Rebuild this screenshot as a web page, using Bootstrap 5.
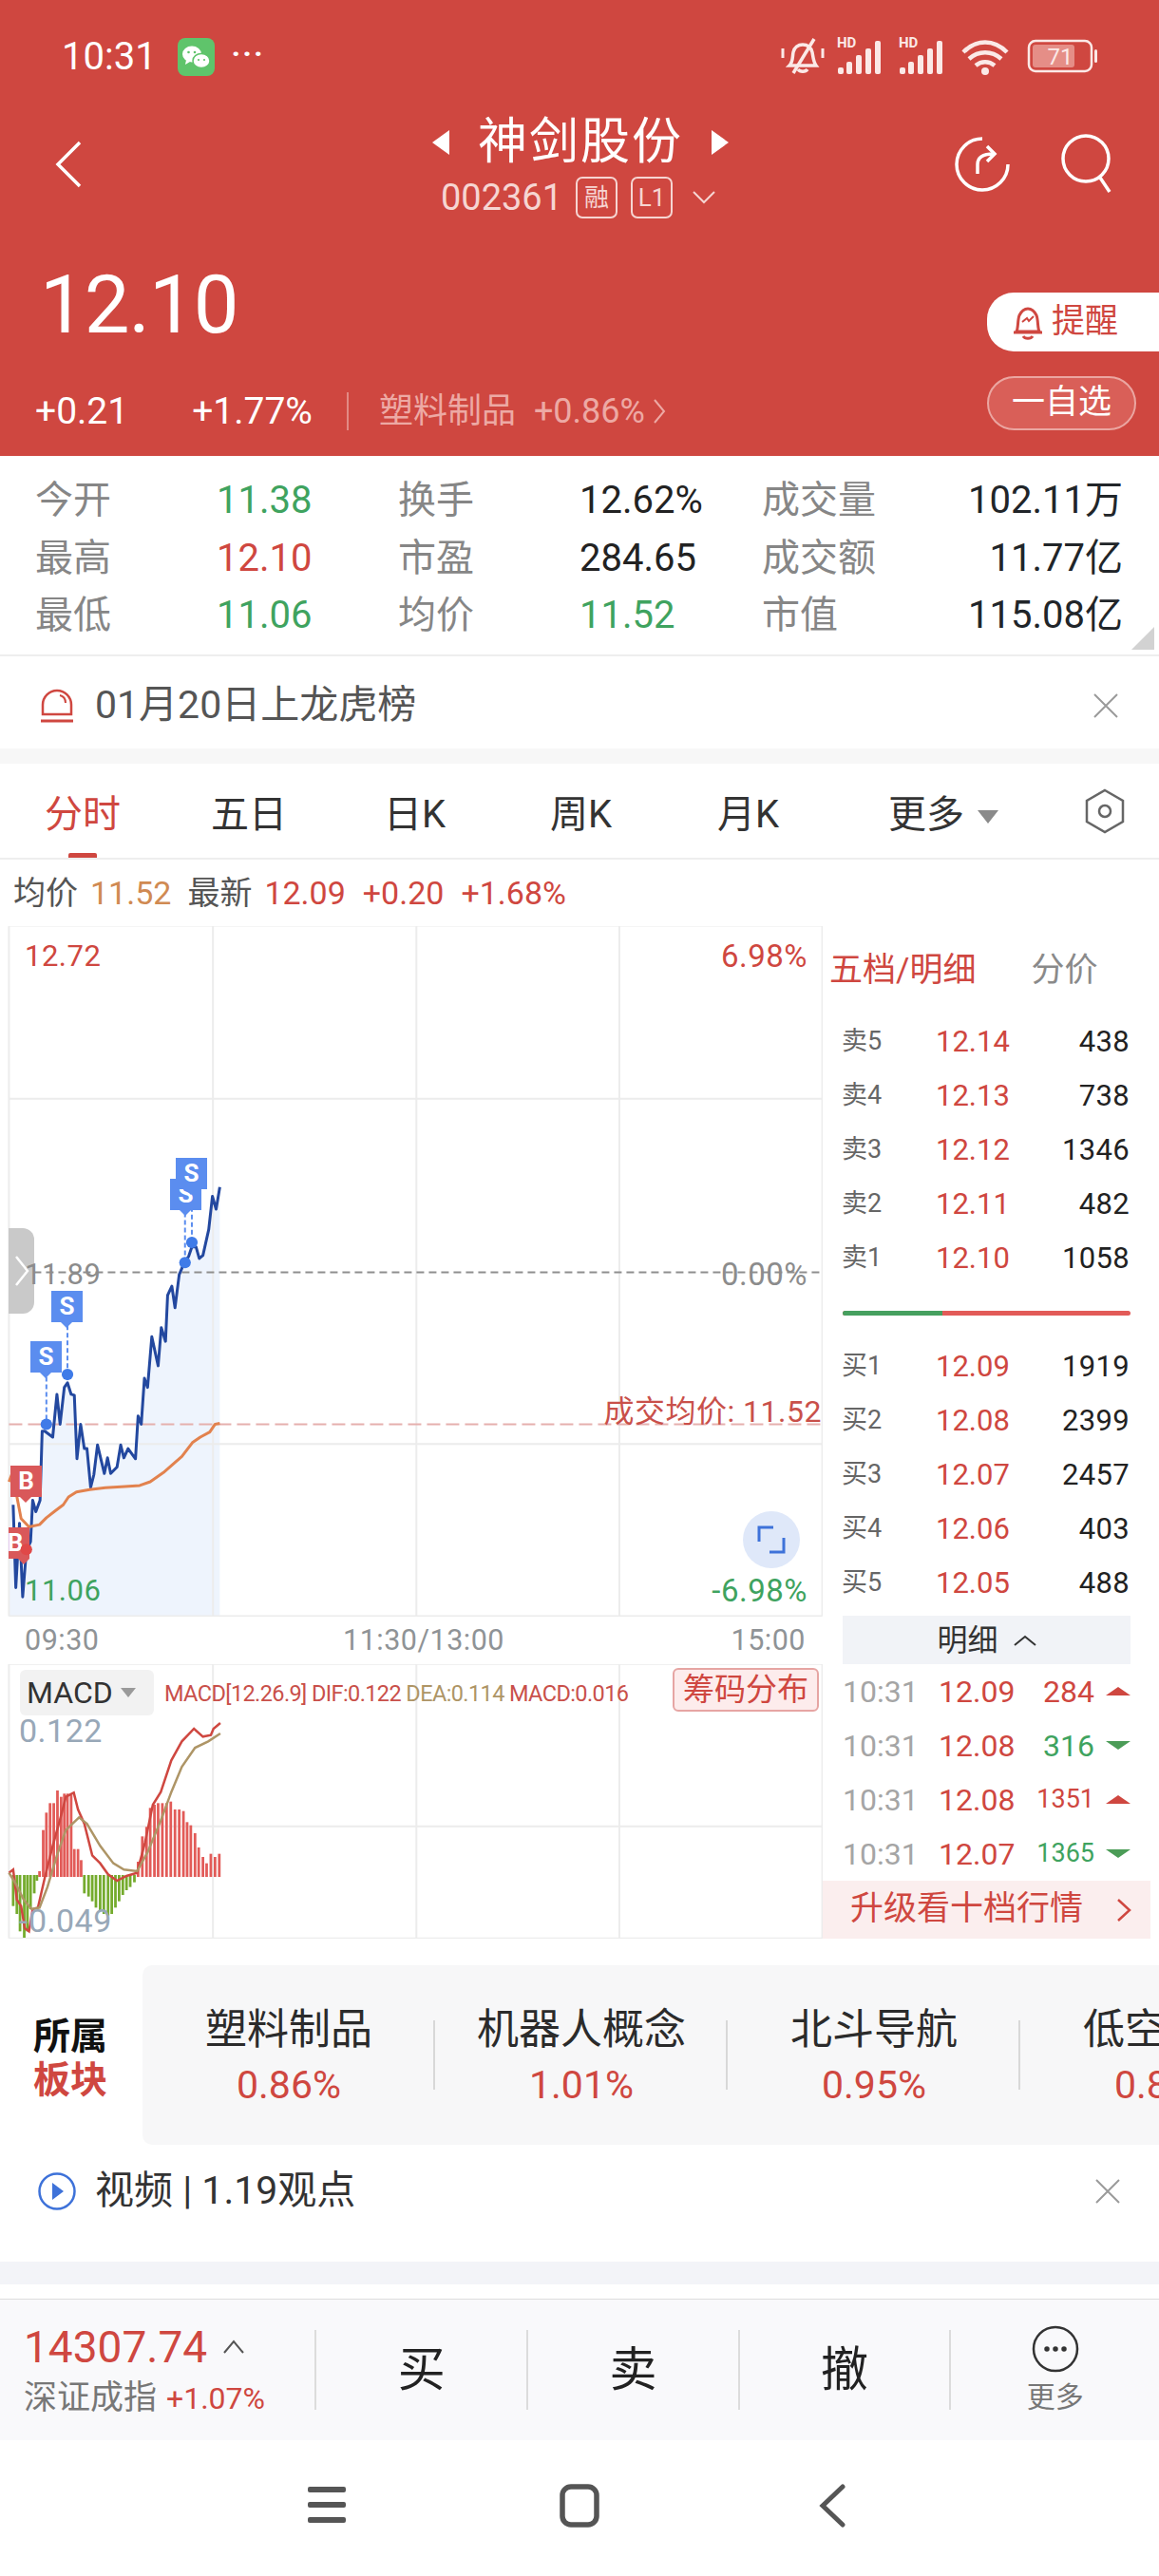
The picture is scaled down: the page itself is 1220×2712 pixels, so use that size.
<!DOCTYPE html>
<html lang="zh-CN">
<head>
<meta charset="UTF-8">
<title>神剑股份</title>
<link href="https://cdn.jsdelivr.net/npm/bootstrap@5.3.0/dist/css/bootstrap.min.css" rel="stylesheet">
<style>
body { width: 1220px; height: 2712px; overflow: hidden; background: #fff; font-family: Roboto, "Noto Sans CJK SC", sans-serif; color: #222; }
.hdr { height: 480px; background: #cf4740; color: #fff; }
.stbar { height: 76px; padding: 22px 64px 0 65px; box-sizing: content-box; }
.st-time { font-size: 40px; line-height: 1; }
.st-dots { font-size: 32px; font-weight: 700; letter-spacing: 2px; line-height: 1; margin-left: 18px; margin-top: -8px; }
.wx { margin-left: 22px; }
.ttlbar { height: 115px; margin-top: 17px; padding: 0 46px 0 48px; }
.ttl-side { flex: 1; }
.ttl-back { margin-left: 8px; }
.ttl-acts { gap: 52px; }
.ttl-mid { padding-top: 5px; }
.ttl-name { font-size: 52px; line-height: 60px; letter-spacing: 2px; }
.ttl-arrows { gap: 30px; }
.ttl-code { font-size: 38px; line-height: 46px; color: #f6d5d2; gap: 14px; margin-top: 5px; margin-left: -4px; }
.tag-box { font-size: 26px; line-height: 40px; height: 44px; width: 44px; border: 2px solid #f6d5d2; border-radius: 7px; text-align: center; white-space: nowrap; }
.ttl-caret { margin-left: 6px; }
.price-l { padding: 41px 0 0 42px; }
.price-num { font-size: 85px; line-height: 100px; font-weight: 400; letter-spacing: -1px; }
.price-sub { margin-top: 40px; margin-left: -5px; height: 44px; font-size: 39px; line-height: 44px; white-space: nowrap; }
.sub-pct { margin-left: 67px; }
.sub-sep { width: 2px; height: 40px; background: #e28a84; margin: 0 32px 0 36px; }
.sub-dim { color: #eda9a4; font-size: 36px; }
.sub-small { margin-left: 19px; }
.price-r { margin-top: 78px; width: 181px; }
.bell-btn { height: 62px; background: #fff; color: #cf4740; border-radius: 28px 0 0 28px; font-size: 35px; padding-left: 26px; gap: 8px; }
.fav-btn { height: 57px; width: 157px; margin-top: 26px; border: 2px solid #eba6a1; border-radius: 29px; background: #d95f58; font-size: 35px; color: #fff; }
.stat-grid { height: 211px; padding: 17px 38px 0 37px; display: grid; grid-template-columns: 191px 191px 191px 192px 1fr; grid-auto-rows: 60.5px; align-items: center; border-bottom: 2px solid #eee; position: relative; font-size: 40px; line-height: 1; }
.stat-lb { color: #868686; }
.stat-end { text-align: right; white-space: nowrap; }
.up { color: #cf4740; }
.dn { color: #3fa35f; }
.corner { position: absolute; right: 5px; bottom: 5px; width: 0; height: 0; border-left: 24px solid transparent; border-bottom: 24px solid #d2d2d2; }
.note-row { height: 97px; padding: 6px 42px 0 42px; font-size: 41px; color: #555; }
.note-txt { margin-left: 22px; }
.gap-band { height: 16px; background: #f7f7f7; }
.tabs { height: 101px; position: relative; border-bottom: 2px solid #eee; font-size: 40px; color: #333; }
.tab-item { position: absolute; top: 29px; line-height: 50px; white-space: nowrap; }
.t1 { left: 47px; color: #cf4740; }
.t2 { left: 222px; } .t3 { left: 404px; } .t4 { left: 579px; } .t5 { left: 755px; } .t6 { left: 935px; }
.tab-caret { display: inline-block; margin-left: 14px; vertical-align: middle; border-left: 11px solid transparent; border-right: 11px solid transparent; border-top: 14px solid #8a8a8a; }
.tab-bar { position: absolute; left: 72px; bottom: 0; width: 30px; height: 5px; background: #cf4740; border-radius: 2px 2px 0 0; }
.tab-hex { position: absolute; left: 1141px; top: 26px; }
.info-row { height: 70px; padding-left: 14px; font-size: 34px; color: #555; white-space: nowrap; gap: 13px; }
.info-row .orange { color: #d08a52; margin-right: 4px; }
.info-row .up { margin-right: 5px; }
.left-col { width: 866px; }
.right-col { width: 354px; }
.chart-wrap { height: 727px; position: relative; overflow: hidden; }
.chart-svg { position: absolute; left: 0; top: -16px; width: 870px; height: 760px; }
.lbl { position: absolute; transform: translateY(-50%); font-size: 31px; line-height: 1; white-space: nowrap; letter-spacing: .5px; }
.l-left { left: 26px; }
.l-right { right: 16px; font-size: 33px; }
.l-top { top: 31px; }
.l-mid { top: 366px; color: #8c8c8c; }
.l-low { top: 699px; }
.l-avg { top: 511px; right: 1px; color: #c9504a; font-size: 32px; }
.mk { position: absolute; width: 33px; height: 33px; background: #5b8def; color: #fff; font-size: 26px; font-weight: 700; line-height: 33px; text-align: center; }
.mk::after { content: ""; position: absolute; left: 10px; top: 33px; border-left: 6px solid transparent; border-right: 6px solid transparent; border-top: 6px solid #5b8def; }
.mk-b { background: #d9585a; }
.mk-b::after { border-top-color: #d9585a; }
.s1 { left: 32px; top: 437px; } .s2 { left: 54px; top: 384px; } .s3 { left: 179px; top: 266px; } .s4 { left: 185px; top: 244px; }
.b1 { left: 11px; top: 568px; } .b2 { left: 9px; top: 633px; width: 22px; text-indent: -8px; overflow: visible; }
.grip { position: absolute; left: 9px; top: 318px; width: 27px; height: 90px; background: #c9c9c9; border-radius: 0 12px 12px 0; }
.zoom-btn { position: absolute; left: 782px; top: 616px; width: 60px; height: 60px; border-radius: 50%; background: #dfe8f9; }
.axis-row { height: 50px; padding: 0 18px 0 26px; font-size: 30.500px; color: #8f9396; letter-spacing: .5px; }
.axis-mid { margin-left: 18px; }
.macd-wrap { height: 289px; position: relative; overflow: hidden; }
.macd-svg { position: absolute; left: 0; top: -52px; width: 870px; height: 360px; }
.macd-sel { position: absolute; left: 21px; top: 6px; width: 141px; height: 48px; background: #f2f2f2; border-radius: 6px; font-size: 32px; color: #333; padding-left: 7px; gap: 8px; }
.macd-caret { border-left: 8px solid transparent; border-right: 8px solid transparent; border-top: 10px solid #9a9a9a; }
.macd-leg { position: absolute; left: 173px; top: 17px; font-size: 23.500px; line-height: 28px; color: #c9504a; white-space: nowrap; letter-spacing: -.6px; }
.macd-leg .tan { color: #ae9566; }
.chip-btn { position: absolute; left: 708px; top: 4px; width: 154px; height: 46px; background: #fdecec; border: 2px solid #e6a5a3; border-radius: 6px; font-size: 33px; line-height: 42px; text-align: center; color: #cf4740; white-space: nowrap; }
.m-hi { left: 20px; top: 70px; color: #98a8b8; font-size: 34px; }
.m-lo { left: 20px; top: 270px; color: #98a8b8; font-size: 34px; }
.rp-head { height: 93px; padding-left: 7px; font-size: 35px; line-height: 1; white-space: nowrap; }
.rp-head .gray { color: #8a8a8a; margin-left: 58px; }
.q-row { height: 57px; padding: 0 31px 0 20px; display: grid; grid-template-columns: 99px 90px 1fr; align-items: center; font-size: 31px; line-height: 1; }
.q-lab { font-size: 27px; color: #666; white-space: nowrap; }
.q-num { text-align: right; letter-spacing: .3px; }
.ob-bar { height: 5px; margin: 27px 30px 25px 21px; border-radius: 3px; overflow: hidden; background: #e25b58; }
.ob-green { width: 105px; height: 100%; background: #46a05f; }
.mx-head { height: 51px; margin: 6px 30px 0 21px; background: #f1f3f7; font-size: 32px; color: #333; gap: 16px; }
.t-row { height: 57px; padding: 0 30px 0 21px; display: grid; grid-template-columns: 101px 91px 73px 1fr; align-items: center; font-size: 32px; line-height: 1; }
.t-time { color: #a5a5a5; }
.t-qty { text-align: right; }
.t-qty.sm { font-size: 27px; }
.tri-u { justify-self: end; border-left: 13px solid transparent; border-right: 13px solid transparent; border-bottom: 9px solid #cf4740; }
.tri-d { justify-self: end; border-left: 13px solid transparent; border-right: 13px solid transparent; border-top: 9px solid #4b9c57; }
.upsell { height: 61px; margin-right: 9px; background: #fbeeee; color: #cf4740; font-size: 35px; padding: 0 20px 0 29px; white-space: nowrap; }
.plates { height: 189px; margin-top: 28px; overflow: hidden; }
.plate-tt { width: 150px; padding: 6px 0 0 35px; font-size: 39px; font-weight: 700; line-height: 46px; color: #111; flex-shrink: 0; }
.plate-box { flex-grow: 1; background: #f7f7f8; border-radius: 10px 0 0 10px; }
.plate-it { width: 308px; flex-shrink: 0; position: relative; text-align: center; white-space: nowrap; }
.plate-it::after { content: ""; position: absolute; right: 0; top: 58px; width: 2px; height: 73px; background: #d8d8d8; }
.plate-name { margin-top: 39px; font-size: 44px; line-height: 58px; color: #2b2b2b; }
.plate-pct { font-size: 41px; line-height: 58px; color: #cf4740; }
.vid-row { height: 123px; padding: 0 40px 25px 40px; font-size: 41px; color: #333; }
.vid-txt { margin-left: 20px; }
.band2 { height: 24px; background: #f3f4f8; }
.band3 { height: 15px; }
.botbar { height: 149px; background: #f9f9fb; border-top: 1px solid #ddd; }
.idx { width: 332px; padding: 0 0 0 25px; height: 100%; white-space: nowrap; }
.idx-num { font-size: 46px; line-height: 58px; color: #cf4740; }
.idx-name { font-size: 35px; line-height: 46px; color: #777; margin-top: 2px; }
.idx-pct { font-size: 32px; color: #cf4740; margin-left: 10px; }
.act { width: 223px; height: 84px; border-left: 2px solid #dcdcdc; font-size: 50px; color: #222; }
.act-more { width: 219px; height: 100%; border: 0; font-size: 30px; color: #777; line-height: 36px; position: relative; }
.act-sep { width: 2px; height: 84px; background: #dcdcdc; }
.navbar-os { height: 143px; padding-bottom: 4px; position: relative; }
.os-ic { position: absolute; top: 46px; }
.os-1 { left: 322px; } .os-2 { left: 588px; } .os-3 { left: 860px; }
</style>
</head>
<body>

<div class="hdr">
  <div class="stbar d-flex align-items-center justify-content-between">
    <div class="d-flex align-items-center">
      <span class="st-time">10:31</span>
      <svg class="wx" width="39" height="40" viewBox="0 0 39 40"><rect width="39" height="40" rx="8" fill="#5fc46b"/><ellipse cx="15" cy="17" rx="10" ry="8.5" fill="#fff"/><path d="M9 23l-1 5 5-3z" fill="#fff"/><ellipse cx="25" cy="24" rx="9" ry="7.5" fill="#fff" stroke="#5fc46b" stroke-width="1.5"/><circle cx="11.500" cy="15" r="1.300" fill="#5fc46b"/><circle cx="18" cy="15" r="1.300" fill="#5fc46b"/><circle cx="22" cy="23" r="1.100" fill="#5fc46b"/><circle cx="28" cy="23" r="1.100" fill="#5fc46b"/></svg>
      <span class="st-dots">···</span>
    </div>
    <div class="d-flex align-items-center">
      <svg width="335" height="46" viewBox="0 0 335 46" fill="none" stroke="#fbe9e7">
        <path d="M10 32c4-4 3-9 4-14 1-5 5-8 10-8s9 3 10 8c1 5 1 10 4 14z" stroke-width="3.500"/><path d="M19 36c2 3 8 3 10 0" stroke-width="3.500"/><path d="M14 40L36 4" stroke-width="3.500"/><path d="M3 14v10M45 14v10" stroke-width="3"/>
        <g fill="#fbe9e7" stroke="none">
          <text x="60" y="13" font-size="15" font-weight="700" font-family="Roboto, sans-serif">HD</text>
          <rect x="61" y="34" width="6" height="7" rx="2"/><rect x="70" y="28" width="6" height="13" rx="2"/><rect x="80" y="21" width="6" height="20" rx="2"/><rect x="90" y="14" width="6" height="27" rx="2"/><rect x="100" y="6" width="6" height="35" rx="2"/>
          <text x="125" y="13" font-size="15" font-weight="700" font-family="Roboto, sans-serif">HD</text>
          <rect x="126" y="34" width="6" height="7" rx="2"/><rect x="135" y="28" width="6" height="13" rx="2"/><rect x="145" y="21" width="6" height="20" rx="2"/><rect x="155" y="14" width="6" height="27" rx="2"/><rect x="165" y="6" width="6" height="35" rx="2"/>
          <circle cx="216" cy="38" r="4"/>
        </g>
        <path d="M193 18c14-14 32-14 46 0M199 25c10-9 24-9 34 0M206 32c6-5 14-5 20 0" stroke-width="4.500"/>
        <rect x="262" y="6" width="66" height="32" rx="7" stroke-width="2.500"/><rect x="266" y="10" width="44" height="24" rx="3" fill="#e58e87" stroke="none"/><rect x="331" y="15" width="3" height="14" rx="1.500" fill="#fbe9e7" stroke="none"/>
        <text x="295" y="31" text-anchor="middle" font-size="24" fill="#fbe9e7" stroke="none" font-family="Roboto, sans-serif">71</text>
      </svg>
    </div>
  </div>

  <div class="ttlbar d-flex align-items-center">
    <div class="ttl-side">
      <svg class="ttl-back" width="32" height="52" viewBox="0 0 32 52" fill="none" stroke="#fff" stroke-width="3.500"><path d="M28 3L5 26l23 23"/></svg>
    </div>
    <div class="text-center ttl-mid">
      <div class="d-flex align-items-center justify-content-center ttl-arrows">
        <svg width="18" height="26" viewBox="0 0 18 26"><path d="M18 0v26L0 13z" fill="#fff"/></svg>
        <span class="ttl-name">神剑股份</span>
        <svg width="18" height="26" viewBox="0 0 18 26"><path d="M0 0v26l18-13z" fill="#fff"/></svg>
      </div>
      <div class="d-flex align-items-center justify-content-center ttl-code">
        <span>002361</span><span class="tag-box">融</span><span class="tag-box">L1</span>
        <svg class="ttl-caret" width="26" height="16" viewBox="0 0 26 16" fill="none" stroke="#f6d5d2" stroke-width="2"><path d="M2 2l11 11L24 2"/></svg>
      </div>
    </div>
    <div class="ttl-side d-flex justify-content-end align-items-center ttl-acts">
      <svg width="60" height="60" viewBox="0 0 60 60" fill="none" stroke="#fff" stroke-width="3.500"><path d="M30 3A27 27 0 1 0 57 30"/><path d="M25 40V30c0-7 5-11 17-11"/><path d="M35 11l8 8-8 8"/></svg>
      <svg width="58" height="66" viewBox="0 0 58 66" fill="none" stroke="#fff" stroke-width="3.500"><circle cx="27" cy="27" r="24"/><path d="M42 47l10 15"/></svg>
    </div>
  </div>

  <div class="d-flex justify-content-between">
    <div class="price-l">
      <div class="price-num">12.10</div>
      <div class="price-sub d-flex align-items-center">
        <span>+0.21</span><span class="sub-pct">+1.77%</span><span class="sub-sep"></span>
        <span class="sub-dim">塑料制品</span><span class="sub-dim sub-small">+0.86%</span>
        <svg class="ms-2" width="14" height="28" viewBox="0 0 14 28" fill="none" stroke="#eda9a4" stroke-width="2"><path d="M2 2l10 12L2 26"/></svg>
      </div>
    </div>
    <div class="price-r">
      <div class="bell-btn d-flex align-items-center">
        <svg width="34" height="40" viewBox="0 0 34 40" fill="none" stroke="#cf4740" stroke-width="3"><path d="M5 30c2-4 1-12 3-17 2-4 5-7 9-7s7 3 9 7c2 5 1 13 3 17z"/><path d="M2 31h30"/><path d="M12 35c2 3 8 3 10 0"/><path d="M11 20l5-4 2 3 5-5" stroke-width="2"/></svg>
        <span>提醒</span>
      </div>
      <div class="fav-btn d-flex align-items-center justify-content-center"><span>一自选</span></div>
    </div>
  </div>
</div>

<div class="stat-grid">
  <span class="stat-lb">今开</span><span class="dn">11.38</span><span class="stat-lb">换手</span><span>12.62%</span><span class="stat-lb d-flex justify-content-between"><span>成交量</span><span class="stat-end text-body">102.11万</span></span>
  <span class="stat-lb">最高</span><span class="up">12.10</span><span class="stat-lb">市盈</span><span>284.65</span><span class="stat-lb d-flex justify-content-between"><span>成交额</span><span class="stat-end text-body">11.77亿</span></span>
  <span class="stat-lb">最低</span><span class="dn">11.06</span><span class="stat-lb">均价</span><span class="dn">11.52</span><span class="stat-lb d-flex justify-content-between"><span>市值</span><span class="stat-end text-body">115.08亿</span></span>
  <span class="corner"></span>
</div>

<div class="note-row d-flex align-items-center">
  <svg width="36" height="38" viewBox="0 0 36 38" fill="none" stroke="#cf4740" stroke-width="2.500"><path d="M3 28V18a15 15 0 0 1 30 0v10z"/><path d="M1 35h34" stroke-width="3"/><path d="M21 8c4 1 6 4 6 8" stroke-width="2"/></svg>
  <span class="note-txt flex-grow-1">01月20日上龙虎榜</span>
  <svg width="28" height="28" viewBox="0 0 28 28" fill="none" stroke="#9a9a9a" stroke-width="2"><path d="M2 2l24 24M26 2L2 26"/></svg>
</div>
<div class="gap-band"></div>

<div class="tabs">
  <span class="tab-item t1">分时</span><span class="tab-item t2">五日</span><span class="tab-item t3">日K</span><span class="tab-item t4">周K</span><span class="tab-item t5">月K</span><span class="tab-item t6">更多<span class="tab-caret"></span></span>
  <span class="tab-bar"></span>
  <svg class="tab-hex" width="44" height="48" viewBox="0 0 44 48" fill="none" stroke="#666" stroke-width="2.500"><path d="M22 2l19 11v22L22 46 3 35V13z"/><circle cx="22" cy="24" r="6"/></svg>
</div>

<div class="info-row d-flex align-items-center">
  <span>均价</span><span class="orange">11.52</span><span>最新</span><span class="up">12.09</span><span class="up">+0.20</span><span class="up">+1.68%</span>
</div>

<div class="d-flex">
  <div class="left-col">
    <div class="chart-wrap">
      <svg class="chart-svg" viewBox="0 0 1568 1568" preserveAspectRatio="none" fill="none">
        <path d="M17 1532V1225L25 1290 30 1470 37 1330 43 1490 50 1390 58 1370 62 1280 68 1305 76 1280 80 1130 85 1130 100 1143 108 1050 114 1115 122 1035 128 1025 135 1050 141 1052 146 1190 153 1115 160 1168 165 1168 172 1252 178 1225 185 1160 198 1222 204 1188 210 1222 222 1208 229 1160 235 1188 243 1168 257 1190 262 1097 268 1115 274 1015 280 1035 288 925 300 988 306 905 314 935 318 835 326 815 332 862 340 790 350 763 358 750 364 730 372 730 378 755 385 748 396 692 403 620 410 648 417 600V1532z" fill="#eef4fd"/>
        <path vector-effect="non-scaling-stroke" d="M17 32H1560M17 408H1560M17 1158H1560M17 1532H1560M17 32V1532M404 32V1532M790 32V1532M1175 32V1532M1560 32V1532" stroke="#ececec" stroke-width="2"/>
        <path vector-effect="non-scaling-stroke" d="M17 785H1560" stroke="#8f8f8f" stroke-width="2" stroke-dasharray="8 5"/>
        <path vector-effect="non-scaling-stroke" d="M17 1115H1560" stroke="#e5b0ae" stroke-width="2" stroke-dasharray="14 6"/>
        <path vector-effect="non-scaling-stroke" d="M88 1012V1115M128 900V1007M351 655V764M364 610V720" stroke="#5b8def" stroke-width="2" stroke-dasharray="5 3"/>
        <path vector-effect="non-scaling-stroke" d="M25 1290L30 1470 37 1330 43 1490 50 1390 58 1370 62 1280 68 1305 76 1280 80 1130 85 1130 100 1143 108 1050 114 1115 122 1035 128 1025 135 1050 141 1052 146 1190 153 1115 160 1168 165 1168 172 1252 178 1225 185 1160 198 1222 204 1188 210 1222 222 1208 229 1160 235 1188 243 1168 257 1190 262 1097 268 1115 274 1015 280 1035 288 925 300 988 306 905 314 935 318 835 326 815 332 862 340 790 350 763 358 750 364 730 372 730 378 755 385 748 396 692 403 620 410 648 417 600" stroke="#23489f" stroke-width="3" stroke-linejoin="round"/>
        <path vector-effect="non-scaling-stroke" d="M17 1240L22 1225 30 1260 40 1320 55 1338 75 1333 88 1318 105 1303 120 1290 130 1273 145 1262 170 1257 200 1253 230 1251 265 1248 285 1240 310 1220 330 1200 345 1185 365 1155 380 1143 398 1132 408 1115 417 1113" stroke="#e2824e" stroke-width="3" stroke-linejoin="round"/>
        <ellipse cx="88" cy="1115" rx="11" ry="12.500" fill="#3f7be8"/><ellipse cx="128" cy="1007" rx="11" ry="12.500" fill="#3f7be8"/><ellipse cx="351" cy="764" rx="11" ry="12.500" fill="#3f7be8"/><ellipse cx="364" cy="720" rx="11" ry="12.500" fill="#3f7be8"/>
      </svg>
      <span class="grip d-flex align-items-center justify-content-center">
        <svg width="16" height="34" viewBox="0 0 16 34" fill="none" stroke="#fff" stroke-width="2.500"><path d="M2 2l12 15L2 32"/></svg>
      </span>
      <span class="lbl l-left l-top up">12.72</span>
      <span class="lbl l-right l-top up">6.98%</span>
      <span class="lbl l-left l-mid">11.89</span>
      <span class="lbl l-right l-mid">0.00%</span>
      <span class="lbl l-avg">成交均价: 11.52</span>
      <span class="mk s1">S</span><span class="mk s2">S</span><span class="mk s3">S</span><span class="mk s4">S</span>
      <span class="mk mk-b b2">B</span><span class="mk mk-b b1">B</span>
      <svg class="chart-svg" viewBox="0 0 1568 1568" preserveAspectRatio="none"><ellipse cx="50" cy="1387" rx="11" ry="12.500" fill="#e04848"/></svg>
      <span class="lbl l-left l-low dn">11.06</span>
      <span class="lbl l-right l-low dn">-6.98%</span>
      <span class="zoom-btn d-flex align-items-center justify-content-center">
        <svg width="30" height="30" viewBox="0 0 30 30" fill="none" stroke="#3e72d9" stroke-width="3"><path d="M2 17V2h15M13 28h15V13"/></svg>
      </span>
    </div>
    <div class="axis-row d-flex align-items-center justify-content-between">
      <span>09:30</span><span class="axis-mid">11:30/13:00</span><span>15:00</span>
    </div>
    <div class="macd-wrap">
      <svg class="macd-svg" viewBox="0 0 1568 1080" preserveAspectRatio="none" fill="none">
        <path vector-effect="non-scaling-stroke" d="M17 155H1560M17 668H1560M17 1022H1560M17 155V1022M404 155V1022M790 155V1022M1175 155V1022M1560 155V1022" stroke="#ececec" stroke-width="2"/>
        <g id="macdBars"></g>
        <path vector-effect="non-scaling-stroke" d="M17 815L25 805 32 900 40 920 47 990 55 1000 62 930 72 925 85 830 100 730 115 640 125 575 140 562 148 615 160 660 175 760 190 785 205 820 222 840 240 825 260 815 275 720 290 600 305 560 325 460 345 400 368 360 385 385 400 380 405 360 418 342" stroke="#cf4740" stroke-width="2.500"/>
        <path vector-effect="non-scaling-stroke" d="M17 815L30 850 45 900 60 930 75 925 90 860 110 750 125 680 150 640 165 660 190 730 215 785 235 805 260 810 280 750 305 650 325 560 345 480 370 420 395 400 418 375" stroke="#ae9566" stroke-width="2.500"/>
      </svg>
      <div class="macd-sel d-flex align-items-center"><span>MACD</span><span class="macd-caret"></span></div>
      <div class="macd-leg">MACD[12.26.9] DIF:0.122 <span class="tan">DEA:0.114</span> MACD:0.016</div>
      <div class="chip-btn">筹码分布</div>
      <span class="lbl m-hi">0.122</span>
      <span class="lbl m-lo">-0.049</span>
    </div>
  </div>

  <div class="right-col">
    <div class="rp-head d-flex align-items-center"><span class="up">五档/明细</span><span class="gray">分价</span></div>
    <div class="q-row"><span class="q-lab">卖5</span><span class="up">12.14</span><span class="q-num">438</span></div>
    <div class="q-row"><span class="q-lab">卖4</span><span class="up">12.13</span><span class="q-num">738</span></div>
    <div class="q-row"><span class="q-lab">卖3</span><span class="up">12.12</span><span class="q-num">1346</span></div>
    <div class="q-row"><span class="q-lab">卖2</span><span class="up">12.11</span><span class="q-num">482</span></div>
    <div class="q-row"><span class="q-lab">卖1</span><span class="up">12.10</span><span class="q-num">1058</span></div>
    <div class="ob-bar"><div class="ob-green"></div></div>
    <div class="q-row"><span class="q-lab">买1</span><span class="up">12.09</span><span class="q-num">1919</span></div>
    <div class="q-row"><span class="q-lab">买2</span><span class="up">12.08</span><span class="q-num">2399</span></div>
    <div class="q-row"><span class="q-lab">买3</span><span class="up">12.07</span><span class="q-num">2457</span></div>
    <div class="q-row"><span class="q-lab">买4</span><span class="up">12.06</span><span class="q-num">403</span></div>
    <div class="q-row"><span class="q-lab">买5</span><span class="up">12.05</span><span class="q-num">488</span></div>
    <div class="mx-head d-flex align-items-center justify-content-center">
      <span>明细</span>
      <svg width="24" height="12" viewBox="0 0 24 12" fill="none" stroke="#333" stroke-width="2"><path d="M1 11L12 2l11 9"/></svg>
    </div>
    <div class="t-row"><span class="t-time">10:31</span><span class="up">12.09</span><span class="t-qty up">284</span><span class="tri-u"></span></div>
    <div class="t-row"><span class="t-time">10:31</span><span class="up">12.08</span><span class="t-qty dn">316</span><span class="tri-d"></span></div>
    <div class="t-row"><span class="t-time">10:31</span><span class="up">12.08</span><span class="t-qty sm up">1351</span><span class="tri-u"></span></div>
    <div class="t-row"><span class="t-time">10:31</span><span class="up">12.07</span><span class="t-qty sm dn">1365</span><span class="tri-d"></span></div>
    <div class="upsell d-flex align-items-center justify-content-between">
      <span>升级看十档行情</span>
      <svg width="16" height="26" viewBox="0 0 16 26" fill="none" stroke="#cf4740" stroke-width="2.500"><path d="M2 2l12 11L2 24"/></svg>
    </div>
  </div>
</div>

<div class="plates d-flex">
  <div class="plate-tt d-flex flex-column justify-content-center"><span>所属</span><span class="up">板块</span></div>
  <div class="plate-box d-flex">
    <div class="plate-it"><div class="plate-name">塑料制品</div><div class="plate-pct">0.86%</div></div>
    <div class="plate-it"><div class="plate-name">机器人概念</div><div class="plate-pct">1.01%</div></div>
    <div class="plate-it"><div class="plate-name">北斗导航</div><div class="plate-pct">0.95%</div></div>
    <div class="plate-it"><div class="plate-name">低空经济</div><div class="plate-pct">0.88%</div></div>
  </div>
</div>

<div class="vid-row d-flex align-items-center">
  <svg width="40" height="40" viewBox="0 0 40 40"><circle cx="20" cy="20" r="18.500" fill="none" stroke="#3e72d9" stroke-width="2.500"/><path d="M15 11l12 9-12 9z" fill="#3e72d9"/></svg>
  <span class="vid-txt flex-grow-1">视频 | 1.19观点</span>
  <svg class="me-0" width="28" height="28" viewBox="0 0 28 28" fill="none" stroke="#9a9a9a" stroke-width="2"><path d="M2 2l24 24M26 2L2 26"/></svg>
</div>
<div class="band2"></div>
<div class="band3"></div>

<div class="botbar d-flex align-items-center">
  <div class="idx d-flex flex-column justify-content-center">
    <div class="idx-num d-flex align-items-center">14307.74
      <svg class="ms-3" width="24" height="16" viewBox="0 0 24 16" fill="none" stroke="#555" stroke-width="2"><path d="M2 14L12 2l10 12"/></svg>
    </div>
    <div class="idx-name">深证成指<span class="idx-pct">+1.07%</span></div>
  </div>
  <div class="act d-flex align-items-center justify-content-center">买</div>
  <div class="act d-flex align-items-center justify-content-center">卖</div>
  <div class="act d-flex align-items-center justify-content-center">撤</div>
  <div class="act-sep"></div>
  <div class="act-more d-flex flex-column align-items-center justify-content-center">
    <svg width="50" height="50" viewBox="0 0 50 50" fill="none" stroke="#333" stroke-width="2.500"><circle cx="25" cy="25" r="23"/><circle cx="16" cy="25" r="1.500" fill="#333"/><circle cx="25" cy="25" r="1.500" fill="#333"/><circle cx="34" cy="25" r="1.500" fill="#333"/></svg>
    <span class="mt-2">更多</span>
  </div>
</div>

<div class="navbar-os">
  <svg class="os-ic os-1" width="44" height="44" viewBox="0 0 44 44" fill="#555"><rect x="2" y="3" width="40" height="6" rx="2"/><rect x="2" y="19" width="40" height="6" rx="2"/><rect x="2" y="35" width="40" height="6" rx="2"/></svg>
  <svg class="os-ic os-2" width="44" height="46" viewBox="0 0 44 46" fill="none" stroke="#555" stroke-width="5.500"><rect x="4" y="3" width="36" height="40" rx="9"/></svg>
  <svg class="os-ic os-3" width="32" height="46" viewBox="0 0 32 46" fill="none" stroke="#555" stroke-width="5" stroke-linecap="round"><path d="M27 3L6 23l21 20"/></svg>
</div>

<script>
  // macd histogram: [x, top or bottom in the svg viewBox]
  var reds = [[75,810],[82,680],[88,625],[95,595],[102,595],[109,555],[116,575],[122,565],[128,565],[135,570],[141,740],[148,740],[154,775],
    [262,780],[270,700],[278,670],[285,610],[293,600],[300,595],[308,595],[316,595],[324,590],[332,615],[340,615],[348,620],[355,655],[362,665],[370,690],[377,735],[385,765],[392,785],[400,755],[408,765],[416,755]];
  var greens = [[25,920],[32,945],[38,1000],[46,1020],[52,1000],[58,930],[65,880],[70,840],
    [160,880],[168,890],[175,905],[182,925],[190,935],[197,945],[205,950],[212,945],[219,925],[226,905],[233,885],[240,870],[247,860],[255,845]];
  var html = '';
  reds.forEach(function (b) {
    html += '<rect x="' + (b[0] - 2.5) + '" y="' + b[1] + '" width="5" height="' + (828 - b[1]) + '" fill="#e25b58"/>';
  });
  greens.forEach(function (b) {
    html += '<rect x="' + (b[0] - 2.5) + '" y="822" width="5" height="' + (b[1] - 822) + '" fill="#74ab2d"/>';
  });
  document.getElementById('macdBars').innerHTML = html;
</script>
<script src="https://cdn.jsdelivr.net/npm/bootstrap@5.3.0/dist/js/bootstrap.bundle.min.js"></script>
</body>
</html>
